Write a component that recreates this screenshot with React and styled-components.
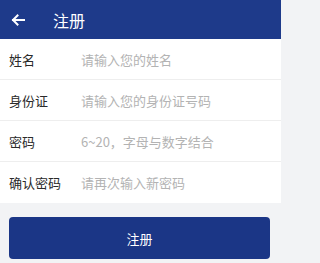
import React from "react";
import styled, { createGlobalStyle } from "styled-components";

const Global = createGlobalStyle`
  html, body { margin: 0; padding: 0; background: #f2f3f5; }
  body { font-family: "Noto Sans CJK SC", "Noto Sans", sans-serif; }
`;

const Page = styled.div`
  width: 281px;
  height: 263px;
  background: #f2f3f5;
  overflow: hidden;
`;

const Header = styled.header`
  height: 39px;
  background: #1e3a8a;
  display: flex;
  align-items: center;
  padding-left: 11px;
  color: #fff;
`;

const Back = styled.svg`
  width: 14px;
  height: 12px;
  margin-top: 1px;
`;

const Title = styled.h1`
  margin: 0 0 0 28px;
  font-size: 16px;
  font-weight: 400;
  line-height: 1;
`;

const Form = styled.div`
  background: #fff;
`;

const Row = styled.div`
  height: 40px;
  display: flex;
  align-items: center;
  padding-left: 9px;
  border-bottom: 1px solid #eeeeee;
  &:last-child { border-bottom: none; height: 41px; }
`;

const Label = styled.span`
  width: 72px;
  font-size: 13px;
  color: #2a2a2a;
`;

const Input = styled.input`
  flex: 1;
  border: none;
  outline: none;
  background: transparent;
  font-family: inherit;
  font-size: 13px;
  padding: 0;
  color: #333;
  &::placeholder { color: #b3b3b3; }
`;

const Footer = styled.div`
  padding: 14px 11px 0 9px;
`;

const Button = styled.button`
  width: 100%;
  height: 42px;
  border: none;
  border-radius: 4px;
  background: #1b3686;
  color: #fff;
  font-family: inherit;
  font-size: 13px;
`;

const fields = [
  ["姓名", "请输入您的姓名"],
  ["身份证", "请输入您的身份证号码"],
  ["密码", "6~20，字母与数字结合"],
  ["确认密码", "请再次输入新密码"],
];

export default function App() {
  return (
    <Page>
      <Global />
      <Header>
        <Back viewBox="0 0 14 12" fill="none" stroke="#fff" strokeWidth="2" strokeLinecap="square">
          <path d="M13 6H2M6.5 1.5L2 6l4.5 4.5" />
        </Back>
        <Title>注册</Title>
      </Header>
      <Form>
        {fields.map(([l, p]) => (
          <Row key={l}>
            <Label>{l}</Label>
            <Input placeholder={p} />
          </Row>
        ))}
      </Form>
      <Footer>
        <Button>注册</Button>
      </Footer>
    </Page>
  );
}
